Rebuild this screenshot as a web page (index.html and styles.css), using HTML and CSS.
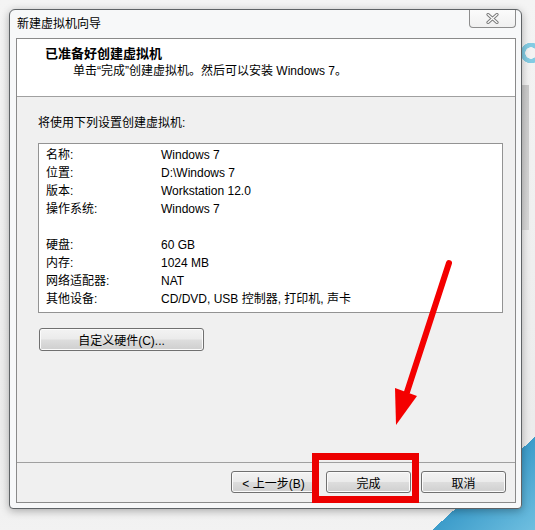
FILE: index.html
```html
<!DOCTYPE html>
<html lang="zh-CN">
<head>
    <meta charset="UTF-8">
    <title>新建虚拟机向导</title>
    <link rel="stylesheet" href="styles.css">
</head>
<body>
<div class="desktop">
    <div class="window">
        <div class="titlebar">
            <span class="title">新建虚拟机向导</span>
            <button class="close-btn" title="关闭">
                <svg width="13" height="11" viewBox="0 0 13 11">
                    <path d="M2 1.5 L11 9.5 M11 1.5 L2 9.5" stroke="#7b7b7b" stroke-width="3.2" stroke-linecap="round"/>
                    <path d="M2 1.5 L11 9.5 M11 1.5 L2 9.5" stroke="#ffffff" stroke-width="1.2" stroke-linecap="round"/>
                </svg>
            </button>
        </div>

        <div class="client">
            <div class="header">
                <div class="header-title">已准备好创建虚拟机</div>
                <div class="header-sub">单击“完成”创建虚拟机。然后可以安装 Windows 7。</div>
            </div>

            <div class="content">
                <div class="intro">将使用下列设置创建虚拟机:</div>
                <div class="summary">
                    <div class="row"><span class="key">名称:</span><span>Windows 7</span></div>
                    <div class="row"><span class="key">位置:</span><span>D:\Windows 7</span></div>
                    <div class="row"><span class="key">版本:</span><span>Workstation 12.0</span></div>
                    <div class="row"><span class="key">操作系统:</span><span>Windows 7</span></div>
                    <div class="row"></div>
                    <div class="row"><span class="key">硬盘:</span><span>60 GB</span></div>
                    <div class="row"><span class="key">内存:</span><span>1024 MB</span></div>
                    <div class="row"><span class="key">网络适配器:</span><span>NAT</span></div>
                    <div class="row"><span class="key">其他设备:</span><span>CD/DVD, USB 控制器, 打印机, 声卡</span></div>
                </div>
                <button class="btn btn-custom">自定义硬件(C)...</button>
            </div>

            <div class="footer">
                <button class="btn">&lt; 上一步(B)</button>
                <button class="btn">完成</button>
                <button class="btn">取消</button>
            </div>
        </div>
    </div>

    <!-- red annotation drawn over the dialog -->
    <svg class="annotation" width="535" height="530" viewBox="0 0 535 530">
        <line x1="449" y1="263" x2="407" y2="392" stroke="#f40000" stroke-width="6" stroke-linecap="round"/>
        <polygon points="395,388 417,396 396,425" fill="#f40000"/>
        <rect x="315.5" y="456.5" width="100" height="43" fill="none" stroke="#ec0000" stroke-width="7"/>
    </svg>
</div>
</body>
</html>
```

FILE: styles.css
```css
body {
    margin: 0;
    font-family: "Liberation Sans", "Noto Sans CJK SC", sans-serif;
    font-size: 12px;
    color: #000;
}

.desktop {
    position: relative;
    width: 535px;
    height: 530px;
    box-sizing: border-box;
    padding: 9px 0 0 9px;
    overflow: hidden;
    background:
        radial-gradient(circle at 531px 53px, transparent 5.5px, #84cce3 6px, #84cce3 10px, transparent 10.5px),
        linear-gradient(#cbcbcb, #d9d9d9) 521px 85px / 8px 145px no-repeat,
        linear-gradient(to bottom right, transparent 50%, #3c9cca 50%, #6fbfe0 100%) right bottom / 103px 93px no-repeat,
        linear-gradient(#f4f4f4, #ececec 80%, #f2f2f2);
}

.window {
    width: 513px;
    height: 500px;
    box-sizing: border-box;
    border: 1px solid #5f6366;
    border-radius: 6px 6px 4px 4px;
    background-color: #f7f8f9;
    box-shadow: 0 2px 9px rgba(0, 0, 0, 0.3);
    display: flex;
    flex-direction: column;
}

.titlebar {
    height: 28px;
    display: flex;
    justify-content: space-between;
    align-items: flex-start;
}

.title {
    padding-left: 7px;
    line-height: 28px;
}

.close-btn {
    width: 47px;
    height: 18px;
    margin: 0 5px 0 0;
    padding: 0;
    border: 1px solid #8d8d8d;
    border-top: none;
    border-radius: 0 0 4px 4px;
    background: linear-gradient(#fbfbfb, #f0f0f0);
    display: flex;
    justify-content: center;
    align-items: center;
}

.client {
    width: 500px;
    height: 465px;
    box-sizing: border-box;
    margin-left: 6px;
    border: 1px solid #8a8a8a;
    background-color: #f0f0f0;
    display: flex;
    flex-direction: column;
}

.header {
    height: 58px;
    box-sizing: border-box;
    padding: 7px 0 0 28px;
    background-color: #fff;
    border-bottom: 1px solid #a0a0a0;
}

.header-title {
    font-weight: bold;
    font-size: 13px;
    line-height: 16px;
}

.header-sub {
    padding-left: 28px;
    line-height: 18px;
}

.content {
    height: 366px;
    box-sizing: border-box;
    padding: 17px 0 0 21px;
    border-bottom: 1px solid #a0a0a0;
}

.intro {
    line-height: 18px;
    margin-bottom: 11px;
}

.summary {
    width: 465px;
    height: 170px;
    box-sizing: border-box;
    border: 1px solid #939393;
    background-color: #fff;
    padding: 2px 0 0 7px;
}

.row {
    display: flex;
    height: 18px;
    line-height: 18px;
}

.key {
    width: 115px;
}

.btn {
    width: 85px;
    height: 22px;
    padding: 0;
    font-family: inherit;
    font-size: 12px;
    color: #000;
    border: 1px solid #707070;
    border-radius: 3px;
    background: linear-gradient(#f3f3f3 0%, #ebebeb 48%, #dddddd 52%, #cfcfcf 100%);
    box-shadow: inset 0 0 0 1px #fbfbfb;
}

.btn-custom {
    width: 165px;
    height: 23px;
    margin: 15px 0 0 1px;
}

.footer {
    flex: 1;
    display: flex;
    justify-content: flex-end;
    align-items: flex-start;
    gap: 10px;
    padding: 8px 9px 0 0;
}

.annotation {
    position: absolute;
    top: 0;
    left: 0;
    pointer-events: none;
}
```
